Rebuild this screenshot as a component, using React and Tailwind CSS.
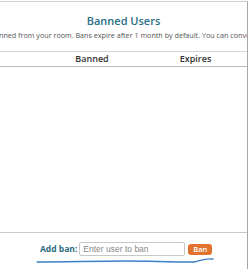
export default function App() {
  return (
    <div className="w-[250px] h-[269px] bg-white overflow-hidden" style={{ fontFamily: '"Open Sans", "Noto Sans", sans-serif' }}>
      <div className="w-[248px] h-full border-r border-t border-r-[#a8a8a8] border-t-[#d0d0d0] mt-px flex flex-col">
        <h2 className="mt-[12px] text-center text-[11px] font-semibold text-[#2a6f87] leading-[14px]">Banned Users</h2>
        <div className="mt-[2px] overflow-hidden whitespace-nowrap text-[7.2px] text-[#555] leading-[10px]">
          <span className="ml-[-1px]">nned from your room. Bans expire after 1 month by default. You can convert a ban into a permanent one.</span>
        </div>
        <div className="mt-[11px] border-t border-b border-t-[#d4d4d4] border-b-[#b8b8b8] h-[16px] grid grid-cols-[40px_104px_1fr] items-center text-[9px] font-semibold text-[#333]">
          <span />
          <span className="text-center">Banned</span>
          <span className="text-center">Expires</span>
        </div>
        <div className="flex-1" />
        <div className="border-t border-[#c8c8c8] h-[37px] mb-[1px] relative">
          <div className="flex items-center mt-[9px] ml-[40px] gap-[2px]">
            <span className="text-[8.5px] font-bold text-[#2a6a80]">Add ban:</span>
            <input
              placeholder="Enter user to ban"
              className="w-[106px] h-[14px] border border-[#c8c8c8] rounded-[2px] px-[3px] text-[8.5px] text-[#555] placeholder-[#888] outline-none"
              style={{ fontFamily: '"Liberation Sans", Arial, sans-serif' }}
            />
            <button className="ml-[1px] h-[11px] w-[24px] rounded-[3px] bg-[#e2732f] text-white text-[7.5px] font-semibold leading-[11px]">Ban</button>
          </div>
          <svg className="absolute left-[36px] top-[23px]" width="178" height="8" viewBox="0 0 178 8">
            <path d="M1 6 C 30 6, 60 5, 90 5 C 115 5, 130 6, 158 6 C 165 5, 168 2, 177 3" stroke="#3d7fc4" strokeWidth="1.3" fill="none" strokeLinecap="round" />
          </svg>
        </div>
      </div>
    </div>
  );
}
